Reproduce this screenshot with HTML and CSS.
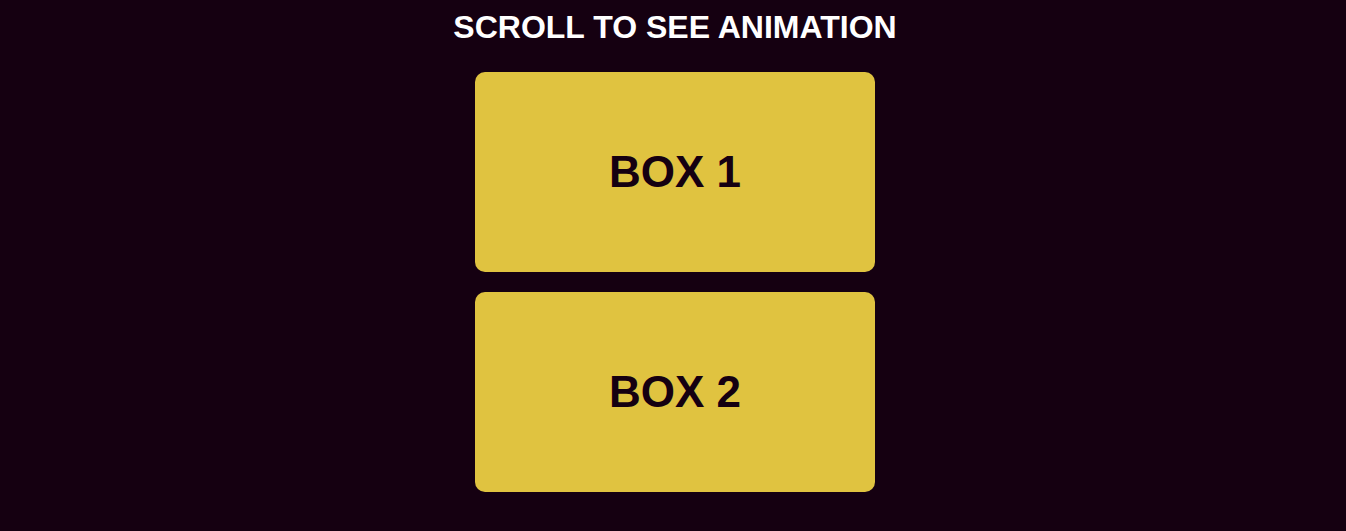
FILE: index.html
```html
<!DOCTYPE html>
<html>
<head>
<meta charset="utf-8">
<link rel="stylesheet" href="styles.css">
</head>
<body>
<main class="page">
  <h1 class="title">SCROLL TO SEE ANIMATION</h1>
  <div class="boxes">
    <div class="box"><h2 class="box-label">BOX 1</h2></div>
    <div class="box"><h2 class="box-label">BOX 2</h2></div>
  </div>
</main>
</body>
</html>
```
FILE: styles.css
```css
html, body {
  margin: 0;
  padding: 0;
  background: #150011;
  font-family: "Liberation Sans", Arial, sans-serif;
  overflow: hidden;
}
.page {
  display: flex;
  flex-direction: column;
  align-items: center;
  padding-top: 9px;
  padding-left: 4px;
}
.title {
  margin: 0;
  color: #ffffff;
  font-size: 32px;
  font-weight: bold;
  line-height: 37px;
}
.boxes {
  display: flex;
  flex-direction: column;
  gap: 20px;
  margin-top: 26px;
}
.box {
  width: 400px;
  height: 200px;
  background: #e0c340;
  border-radius: 10px;
  display: flex;
  align-items: center;
  justify-content: center;
}
.box-label {
  margin: 0;
  color: #150011;
  font-size: 44px;
  font-weight: bold;
}
```
